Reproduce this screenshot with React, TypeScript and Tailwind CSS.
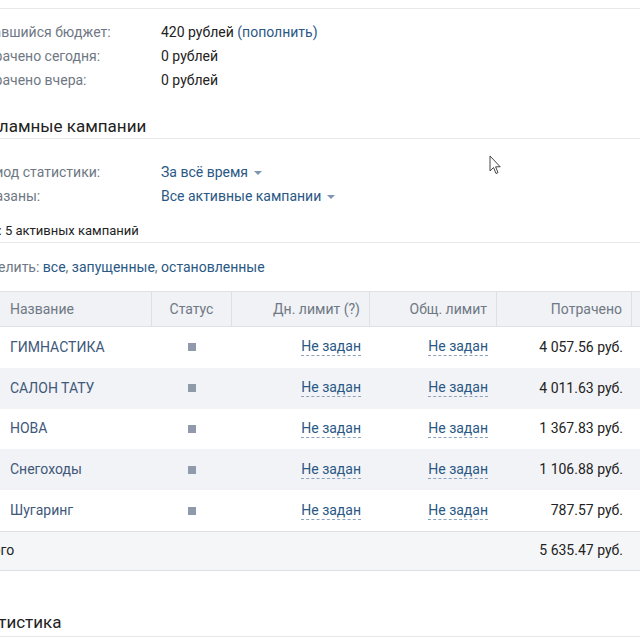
import React from 'react';

const rows = [
  { name: 'ГИМНАСТИКА', spent: '4 057.56 руб.' },
  { name: 'САЛОН ТАТУ', spent: '4 011.63 руб.' },
  { name: 'НОВА', spent: '1 367.83 руб.' },
  { name: 'Снегоходы', spent: '1 106.88 руб.' },
  { name: 'Шугаринг', spent: '787.57 руб.' },
];

const Caret = () => (
  <svg width="8" height="4" viewBox="0 0 8 4" className="ml-[6px] mt-[2px]">
    <path d="M0 0 L8 0 L4 4 Z" fill="#7d95b2" />
  </svg>
);

const Dashed = ({ children }: { children: React.ReactNode }) => (
  <span className="text-[#2a5885] border-b border-dashed border-[#8ea2ba] leading-[17px]">{children}</span>
);

export default function App() {
  return (
    <div className="relative w-[640px] h-[640px] overflow-hidden bg-white font-['Roboto',sans-serif] text-[14px] text-[#222]">
      <div className="ml-[-30px] w-[800px]">
        {/* cut-off section above */}
        <div className="h-[9px] border-b border-[#e7e8ec]" />

        {/* budget */}
        <div className="pt-[11px]">
          <div className="flex h-[24px] items-center">
            <div className="w-[191px] text-[#6f7884]">Оставшийся бюджет:</div>
            <div>
              420 рублей <span className="text-[#2a5885]">(пополнить)</span>
            </div>
          </div>
          <div className="flex h-[24px] items-center">
            <div className="w-[191px] text-[#6f7884]">Потрачено сегодня:</div>
            <div>0 рублей</div>
          </div>
          <div className="flex h-[24px] items-center">
            <div className="w-[191px] text-[#6f7884]">Потрачено вчера:</div>
            <div>0 рублей</div>
          </div>
        </div>

        {/* campaigns */}
        <div className="mt-[24px] pb-[2px] border-b border-[#e7e8ec]">
          <div className="h-[20px] leading-[20px] text-[17px] text-[#222]">Рекламные кампании</div>
        </div>

        <div className="pt-[21px]">
          <div className="flex h-[24px] items-center">
            <div className="w-[191px] text-[#6f7884]">Период статистики:</div>
            <div className="flex items-center text-[#2a5885]">
              За всё время <Caret />
            </div>
          </div>
          <div className="flex h-[24px] items-center">
            <div className="w-[191px] text-[#6f7884]">Показаны:</div>
            <div className="flex items-center text-[#2a5885]">
              Все активные кампании <Caret />
            </div>
          </div>
        </div>

        <div className="mt-[14px] pb-[2px] border-b border-[#e7e8ec]">
          <div className="ml-[-6px] h-[18px] leading-[18px] text-[13px] text-[#222]">Всего: 5 активных кампаний</div>
        </div>

        <div className="pt-[14px] h-[20px] box-content leading-[20px] text-[#6f7884]">
          Выделить: <span className="text-[#2a5885]">все</span>, <span className="text-[#2a5885]">запущенные</span>,{' '}
          <span className="text-[#2a5885]">остановленные</span>
        </div>

        {/* table */}
        <div className="mt-[14px]">
          <div className="flex h-[36px] bg-[#f0f2f5] border-y border-[#dde1e6] text-[#6f7884]">
            <div className="w-[182px] pl-[40px] flex items-center border-r border-[#dde1e6]">Название</div>
            <div className="w-[80px] flex items-center justify-center border-r border-[#dde1e6]">Статус</div>
            <div className="w-[138px] pr-[9px] flex items-center justify-end border-r border-[#dde1e6]">Дн. лимит (?)</div>
            <div className="w-[127px] pr-[9px] flex items-center justify-end border-r border-[#dde1e6]">Общ. лимит</div>
            <div className="w-[135px] pr-[9px] flex items-center justify-end border-r border-[#dde1e6]">Потрачено</div>
            <div className="flex-1" />
          </div>
          {rows.map((r, i) => (
            <div key={r.name} className={`flex h-[40.8px] ${i % 2 === 1 ? 'bg-[#f2f3f6]' : 'bg-white'}`}>
              <div className="w-[182px] pl-[40px] flex items-center text-[#40587a]">{r.name}</div>
              <div className="w-[80px] flex items-center justify-center">
                <span className="w-[8px] h-[8px] bg-[#8f9baa]" />
              </div>
              <div className="w-[138px] pr-[9px] flex items-center justify-end">
                <Dashed>Не задан</Dashed>
              </div>
              <div className="w-[127px] pr-[9px] flex items-center justify-end">
                <Dashed>Не задан</Dashed>
              </div>
              <div className="w-[135px] pr-[9px] flex items-center justify-end">{r.spent}</div>
              <div className="flex-1" />
            </div>
          ))}
          <div className="flex h-[40px] bg-[#f5f6f8] border-y border-[#dde1e6]">
            <div className="w-[527px] pl-[6px] flex items-center">Итого</div>
            <div className="w-[135px] pr-[9px] flex items-center justify-end">5 635.47 руб.</div>
            <div className="flex-1" />
          </div>
        </div>

        <div className="mt-[41px] pb-[4px] border-b border-[#e7e8ec]">
          <div className="h-[20px] leading-[20px] text-[17px] text-[#222]">Статистика</div>
        </div>
      </div>

      {/* mouse pointer */}
      <svg className="absolute left-[489px] top-[155px]" width="13" height="21" viewBox="0 0 13 21">
        <path d="M1 1 L1 16 L4.5 12.5 L7 18.5 L9 17.6 L6.6 11.8 L11.2 11.8 Z" fill="#fff" stroke="#444" strokeWidth="1" strokeLinejoin="round" />
      </svg>
    </div>
  );
}
